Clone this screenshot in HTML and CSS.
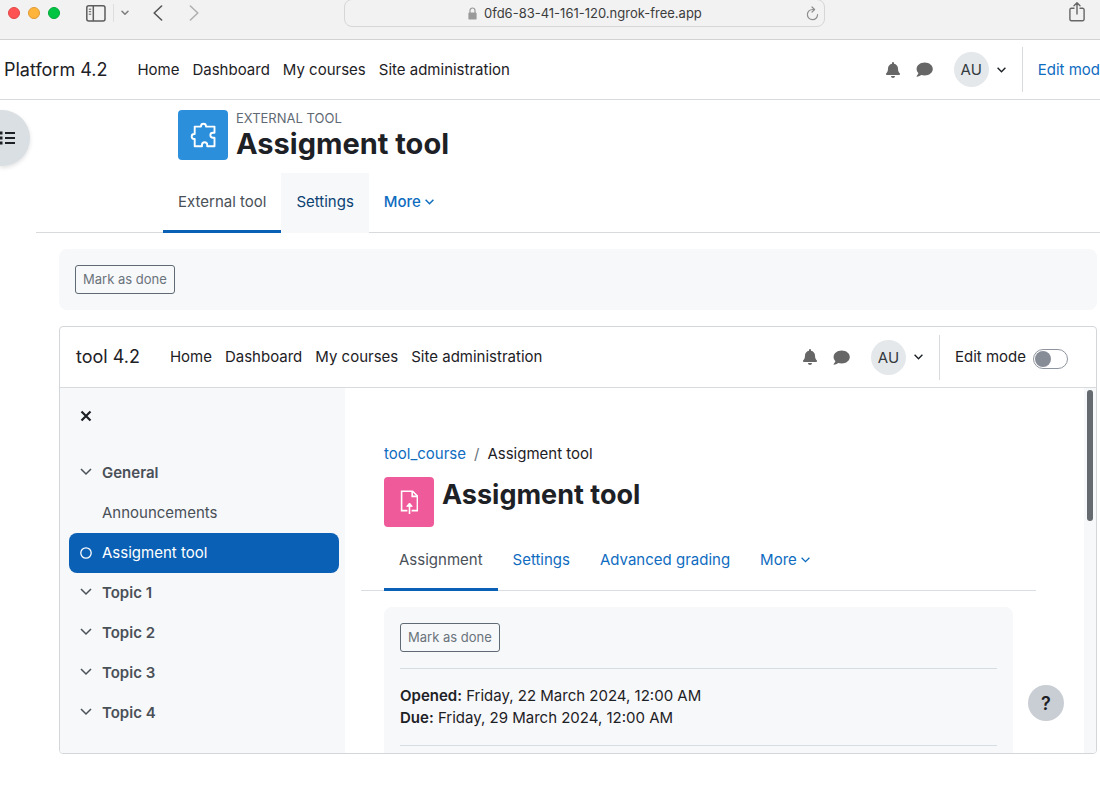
FILE: index.html
```html
<!DOCTYPE html>
<html lang="en">

<head>
    <meta charset="UTF-8">
    <meta name="viewport" content="width=device-width, initial-scale=1.0">
    <title>Assigment tool</title>
    <link rel="stylesheet" href="styles.css">
</head>

<body>
    <!-- Browser toolbar -->
    <div class="toolbar">
        <div class="toolbar-left">
            <span class="light red"></span>
            <span class="light yellow"></span>
            <span class="light green"></span>
            <button class="icon-btn sidebar-btn" aria-label="Sidebar">
                <svg width="20" height="17" viewBox="0 0 20 17" fill="none" stroke="#5c5c5c" stroke-width="1.5">
                    <rect x="0.8" y="0.8" width="18.2" height="15.2" rx="2" />
                    <path d="M7.3 1v15" />
                    <path d="M2.8 4.2h2.4M2.8 6.7h2.4M2.8 9.2h2.4" stroke-width="1" />
                </svg>
            </button>
            <span class="toolbar-divider"></span>
            <button class="icon-btn" aria-label="Tab groups">
                <svg width="8" height="6" viewBox="0 0 8 6" fill="none" stroke="#7c7c7c" stroke-width="1.5" stroke-linecap="round" stroke-linejoin="round">
                    <path d="M1 1.2l3 3 3-3" />
                </svg>
            </button>
            <button class="icon-btn back-btn" aria-label="Back">
                <svg width="10" height="16" viewBox="0 0 10 16" fill="none" stroke="#555" stroke-width="1.6" stroke-linecap="round" stroke-linejoin="round">
                    <path d="M8.6 1L1.2 8l7.4 7" />
                </svg>
            </button>
            <button class="icon-btn forward-btn" aria-label="Forward">
                <svg width="10" height="16" viewBox="0 0 10 16" fill="none" stroke="#b0b0b0" stroke-width="1.6" stroke-linecap="round" stroke-linejoin="round">
                    <path d="M1.4 1l7.4 7-7.4 7" />
                </svg>
            </button>
        </div>
        <div class="url-bar">
            <svg width="9" height="13" viewBox="0 0 9 13">
                <rect x="0.4" y="5.4" width="8.2" height="7.2" rx="1.2" fill="#999" />
                <path d="M2 6V3.5a2.5 2.5 0 0 1 5 0V6" fill="none" stroke="#999" stroke-width="1.2" />
            </svg>
            <span>0fd6-83-41-161-120.ngrok-free.app</span>
            <button class="icon-btn reload-btn" aria-label="Reload">
                <svg width="13" height="15" viewBox="0 0 13 15" fill="none" stroke="#8e8e8e" stroke-width="1.2" stroke-linecap="round" stroke-linejoin="round">
                    <path d="M11.6 8.6A5.1 5.1 0 1 1 6.6 3.5h1.6" />
                    <path d="M6 1l2.6 2.5L6 6" />
                </svg>
            </button>
        </div>
        <div class="toolbar-right">
            <button class="icon-btn" aria-label="Share">
                <svg width="16" height="22" viewBox="0 0 16 22" fill="none" stroke="#666" stroke-width="1.4" stroke-linecap="round" stroke-linejoin="round">
                    <path d="M5 6.2H2.4A1.5 1.5 0 0 0 .9 7.7v9.600a1.5 1.5 0 0 0 1.5 1.5h11.2a1.5 1.5 0 0 0 1.5-1.5V7.700a1.5 1.5 0 0 0-1.5-1.5H11" />
                    <path d="M8 12V1M5 3.800L8 .8l3 3" />
                </svg>
            </button>
        </div>
    </div>

    <!-- Platform navigation -->
    <nav class="navbar platform-nav">
        <a class="brand" href="#">Platform 4.2</a>
        <div class="nav-links">
            <a href="#">Home</a>
            <a href="#">Dashboard</a>
            <a href="#">My courses</a>
            <a href="#">Site administration</a>
        </div>
        <div class="user-nav">
            <button class="icon-btn" aria-label="Notifications">
                <svg width="14" height="16" viewBox="0 0 448 512" fill="#666">
                    <path d="M224 512c35 0 64-29 64-64H160c0 35 29 64 64 64zm215-150c-19-21-55-52-55-154 0-78-54-140-128-155V32a32 32 0 0 0-64 0v21C118 68 64 130 64 208c0 102-36 133-55 154-6 6-9 14-9 22 0 16 13 32 32 32h384c19 0 32-16 32-32 0-8-3-16-9-22z" />
                </svg>
            </button>
            <button class="icon-btn" aria-label="Messages">
                <svg width="17" height="15" viewBox="0 0 17 15" fill="#666">
                    <path d="M8.700 .5C4.200 .5 .6 3.400 .6 7c0 1.600 .7 3 1.800 4.100C2.100 12.500 1.100 13.600 .6 14.200c-.2 .2 0 .5 .3 .5 1.900-.1 3.400-.9 4.400-1.700 1 .3 2.200 .5 3.400 .5 4.500 0 8.100-2.900 8.100-6.500S13.200 .5 8.700 .5z" />
                </svg>
            </button>
            <button class="user-menu">
                <span class="avatar">AU</span>
                <svg width="9" height="6" viewBox="0 0 9 6" fill="none" stroke="#1d2125" stroke-width="1.4"><path d="M.6 .8l3.9 3.9L8.4 .8" /></svg>
            </button>
            <a class="edit-mode" href="#">Edit mod</a>
        </div>
    </nav>

    <button class="drawer-toggle" aria-label="Open course index">
        <svg width="16" height="14" viewBox="0 0 16 14" stroke="#1d2125" stroke-width="2">
            <path d="M5 2h10M5 7h10M5 12h10" />
            <path d="M0 2h2.5M0 7h2.5M0 12h2.5" stroke-width="3" />
        </svg>
    </button>

    <header class="page-header">
        <div class="activity-header">
            <div class="activity-icon blue">
                <svg width="26" height="26" viewBox="0 0 26 26" fill="none" stroke="#fff" stroke-width="1.9" stroke-linejoin="round">
                    <path d="M4.700 4.600H11V4.200a2.500 2.500 0 0 1 5 0V4.600H24.500V10.800H22.800a2.400 2.400 0 0 0 0 4.900H24.500V24.300H17.200V22.800a2.600 2.600 0 0 0-5.200 0V24.300H4.700V17H4.200a2.500 2.500 0 0 1 0-5H4.700z" />
                </svg>
            </div>
            <div>
                <div class="activity-type">External tool</div>
                <h1>Assigment tool</h1>
            </div>
        </div>
        <nav class="tabs platform-tabs">
            <a class="tab active" href="#">External tool</a>
            <a class="tab hover" href="#">Settings</a>
            <a class="tab more" href="#">More
                <svg width="9" height="6" viewBox="0 0 9 6" fill="none" stroke="#0f6cbf" stroke-width="1.5"><path d="M.6 .8l3.9 3.9L8.4 .8" /></svg>
            </a>
        </nav>
    </header>

    <main class="page-content">
        <div class="completion">
            <button class="btn-outline">Mark as done</button>
        </div>

        <!-- Embedded tool -->
        <section class="tool-frame">
            <nav class="navbar tool-nav">
                <a class="brand" href="#">tool 4.2</a>
                <div class="nav-links">
                    <a href="#">Home</a>
                    <a href="#">Dashboard</a>
                    <a href="#">My courses</a>
                    <a href="#">Site administration</a>
                </div>
                <div class="user-nav">
                    <button class="icon-btn" aria-label="Notifications">
                        <svg width="14" height="16" viewBox="0 0 448 512" fill="#666">
                            <path d="M224 512c35 0 64-29 64-64H160c0 35 29 64 64 64zm215-150c-19-21-55-52-55-154 0-78-54-140-128-155V32a32 32 0 0 0-64 0v21C118 68 64 130 64 208c0 102-36 133-55 154-6 6-9 14-9 22 0 16 13 32 32 32h384c19 0 32-16 32-32 0-8-3-16-9-22z" />
                        </svg>
                    </button>
                    <button class="icon-btn" aria-label="Messages">
                        <svg width="17" height="15" viewBox="0 0 17 15" fill="#666">
                            <path d="M8.700 .5C4.200 .5 .6 3.400 .6 7c0 1.600 .7 3 1.800 4.100C2.100 12.500 1.100 13.600 .6 14.200c-.2 .2 0 .5 .3 .5 1.900-.1 3.400-.9 4.400-1.700 1 .3 2.200 .5 3.400 .5 4.500 0 8.100-2.900 8.100-6.500S13.200 .5 8.700 .5z" />
                        </svg>
                    </button>
                    <button class="user-menu">
                        <span class="avatar">AU</span>
                        <svg width="9" height="6" viewBox="0 0 9 6" fill="none" stroke="#1d2125" stroke-width="1.4"><path d="M.6 .8l3.9 3.9L8.4 .8" /></svg>
                    </button>
                    <div class="edit-mode">
                        <label for="edit-switch">Edit mode</label>
                        <input class="switch" type="checkbox" id="edit-switch">
                    </div>
                </div>
            </nav>

            <div class="tool-body">
                <aside class="course-index">
                    <button class="icon-btn close-btn" aria-label="Close course index">
                        <svg width="12" height="12" viewBox="0 0 12 12" stroke="#1d2125" stroke-width="2.2"><path d="M1.5 1.5l9 9M10.5 1.5l-9 9" /></svg>
                    </button>
                    <a class="index-item section" href="#">
                        <svg width="12" height="8" viewBox="0 0 12 8" fill="none" stroke="#495057" stroke-width="1.5"><path d="M1 1l5 5 5-5" /></svg>
                        General
                    </a>
                    <a class="index-item child" href="#">Announcements</a>
                    <a class="index-item current" href="#">
                        <svg width="12" height="12" viewBox="0 0 12 12" fill="none" stroke="#fff" stroke-width="1.3"><circle cx="6" cy="6" r="5.2" /></svg>
                        Assigment tool
                    </a>
                    <a class="index-item section" href="#">
                        <svg width="12" height="8" viewBox="0 0 12 8" fill="none" stroke="#495057" stroke-width="1.5"><path d="M1 1l5 5 5-5" /></svg>
                        Topic 1
                    </a>
                    <a class="index-item section" href="#">
                        <svg width="12" height="8" viewBox="0 0 12 8" fill="none" stroke="#495057" stroke-width="1.5"><path d="M1 1l5 5 5-5" /></svg>
                        Topic 2
                    </a>
                    <a class="index-item section" href="#">
                        <svg width="12" height="8" viewBox="0 0 12 8" fill="none" stroke="#495057" stroke-width="1.5"><path d="M1 1l5 5 5-5" /></svg>
                        Topic 3
                    </a>
                    <a class="index-item section" href="#">
                        <svg width="12" height="8" viewBox="0 0 12 8" fill="none" stroke="#495057" stroke-width="1.5"><path d="M1 1l5 5 5-5" /></svg>
                        Topic 4
                    </a>
                </aside>

                <div class="tool-content">
                    <div class="breadcrumb">
                        <a href="#">tool_course</a>
                        <span class="separator">/</span>
                        <span>Assigment tool</span>
                    </div>
                    <div class="tool-title">
                        <div class="activity-icon pink">
                            <svg width="18" height="24" viewBox="0 0 18 24" fill="none" stroke="#fff" stroke-width="1.6">
                                <path d="M7.4 20.6H1.600V1.200h11L17.400 6v14.600h-5.800" />
                                <path d="M12.200 1.400V6.400H17.200" />
                                <path d="M9.500 24V14" />
                                <path d="M6.700 16.300l2.800-3.300 2.800 3.300z" fill="#fff" stroke-width="1" />
                            </svg>
                        </div>
                        <h2>Assigment tool</h2>
                    </div>
                    <nav class="tabs tool-tabs">
                        <a class="tab active" href="#">Assignment</a>
                        <a class="tab" href="#">Settings</a>
                        <a class="tab" href="#">Advanced grading</a>
                        <a class="tab" href="#">More
                            <svg width="9" height="6" viewBox="0 0 9 6" fill="none" stroke="#0f6cbf" stroke-width="1.3"><path d="M.6 .8l3.9 3.9L8.4 .8" /></svg>
                        </a>
                    </nav>
                    <div class="details">
                        <button class="btn-outline">Mark as done</button>
                        <div class="dates">
                            <div><strong>Opened:</strong> Friday, 22 March 2024, 12:00 AM</div>
                            <div><strong>Due:</strong> Friday, 29 March 2024, 12:00 AM</div>
                        </div>
                    </div>
                </div>

                <div class="scroll-track">
                    <div class="scroll-thumb"></div>
                </div>
            </div>

            <button class="help-btn" aria-label="Help">?</button>
        </section>
    </main>
</body>

</html>
```
FILE: styles.css
```css
* {
    box-sizing: border-box;
}

body {
    margin: 0;
    font-family: Inter, "Liberation Sans", sans-serif;
    font-size: 15px;
    line-height: 22px;
    color: #1d2125;
    background-color: #fff;
}

a {
    color: #0f6cbf;
    text-decoration: none;
}

button {
    font-family: inherit;
    cursor: pointer;
}

svg {
    display: block;
    flex-shrink: 0;
}

.icon-btn {
    padding: 0;
    border: none;
    background: none;
}

/* Browser toolbar */
.toolbar {
    display: flex;
    align-items: center;
    height: 40px;
    padding-bottom: 13px;
    background-color: #f2f2f2;
    border-bottom: 1px solid #d2d2d2;
}

.toolbar-left {
    display: flex;
    align-items: center;
    flex: 0 0 344px;
    padding-left: 8px;
}

.light {
    width: 12px;
    height: 12px;
    margin-right: 8px;
    border-radius: 50%;
}

.red {
    background-color: #ff5353;
    border: 1px solid #e24545;
}

.yellow {
    background-color: #ffb43c;
    border: 1px solid #e09a32;
}

.green {
    background-color: #00c543;
    border: 1px solid #00a838;
}

.sidebar-btn {
    margin-left: 18px;
}

.toolbar-divider {
    width: 1px;
    height: 18px;
    margin: 0 7px;
    background-color: #dedede;
}

.back-btn {
    margin-left: 24px;
}

.forward-btn {
    margin-left: 26px;
}

.url-bar {
    display: flex;
    align-items: center;
    flex: 0 1 481px;
    height: 28px;
    padding: 0 5px 0 123px;
    border: 1px solid #d6d6d6;
    border-radius: 8px;
    font-size: 13px;
    color: #3c3c3c;
}

.url-bar span {
    margin-left: 7px;
}

.reload-btn {
    margin-left: auto;
}

.toolbar-right {
    display: flex;
    flex: 1;
    justify-content: flex-end;
    padding-right: 15px;
}

/* Navigation bars */
.navbar {
    display: flex;
    align-items: center;
    white-space: nowrap;
    border-bottom: 1px solid #d8dbde;
}

.navbar a {
    color: #1d2125;
}

.navbar .brand {
    margin-right: 30px;
    font-size: 18px;
}

.nav-links {
    display: flex;
    gap: 13px;
}

.platform-nav {
    height: 60px;
    padding-left: 4px;
}

.tool-nav {
    height: 61px;
    padding: 0 28px 0 16px;
}

.user-nav {
    display: flex;
    align-items: center;
    gap: 16px;
    margin-left: auto;
}

.user-menu {
    display: flex;
    align-items: center;
    gap: 8px;
    margin-left: 5px;
    padding: 0;
    border: none;
    background: none;
}

.avatar {
    width: 35px;
    height: 35px;
    border-radius: 50%;
    background-color: #e4e8eb;
    color: #343a40;
    font-size: 15px;
    line-height: 35px;
    text-align: center;
}

.edit-mode {
    display: flex;
    align-items: center;
    gap: 7px;
    height: 45px;
    padding-left: 15px;
    border-left: 1px solid #d8dbde;
}

.platform-nav .edit-mode {
    color: #0f6cbf;
}

.switch {
    appearance: none;
    width: 35px;
    height: 20px;
    margin: 4px 0 0;
    padding: 1px;
    border: 1px solid #8f959e;
    border-radius: 10px;
    background-color: #fff;
}

.switch::before {
    content: "";
    display: block;
    width: 16px;
    height: 16px;
    border-radius: 50%;
    background-color: #868d97;
}

/* Drawer button over the left edge */
.drawer-toggle {
    position: absolute;
    left: 0;
    top: 110px;
    width: 30px;
    height: 56px;
    padding: 0;
    border: none;
    border-radius: 0 28px 28px 0;
    background-color: #dadfe3;
    box-shadow: 0 2px 4px rgba(0, 0, 0, 0.12);
}

/* Page header */
.page-header {
    margin-left: 36px;
    border-bottom: 1px solid #d8dbde;
}

.activity-header {
    display: flex;
    gap: 8px;
    padding: 10px 0 11px 142px;
}

.activity-icon {
    display: flex;
    align-items: center;
    justify-content: center;
    flex-shrink: 0;
    width: 50px;
    height: 50px;
    border-radius: 4px;
}

.blue {
    background-color: #2b8fdc;
}

.pink {
    background-color: #ef5b9a;
}

.activity-type {
    font-size: 13px;
    line-height: 16px;
    color: #5f6a74;
    text-transform: uppercase;
}

h1,
h2 {
    margin: 0;
    font-weight: 700;
    line-height: 36px;
}

h1 {
    font-size: 29px;
}

h2 {
    font-size: 27px;
}

.tabs {
    display: flex;
}

.tab {
    display: flex;
    align-items: center;
    gap: 4px;
    height: 60px;
    padding: 0 15px;
    border-bottom: 3px solid transparent;
    white-space: nowrap;
}

.tab.active {
    color: #495057;
    border-bottom-color: #0a60b5;
}

.tab.hover {
    color: #0b4272;
    background-color: #f7f8fa;
    border-bottom-color: #f7f8fa;
}

.tab.more {
    font-weight: 500;
}

.platform-tabs {
    margin-bottom: -1px;
    padding-left: 127px;
}

/* Page content */
.page-content {
    padding: 16px 3px 50px 59px;
}

.completion {
    margin-bottom: 16px;
    padding: 16px;
    border-radius: 8px;
    background-color: #f7f8fa;
}

.btn-outline {
    display: block;
    padding: 0 7px;
    border: 1px solid #5f6a74;
    border-radius: 3px;
    background: none;
    color: #6a737b;
    font-size: 13px;
    line-height: 27px;
}

.tool-frame {
    position: relative;
    height: 428px;
    border: 1px solid #d3d7da;
    border-radius: 4px;
    overflow: hidden;
}

.tool-body {
    display: flex;
    height: 365px;
}

.course-index {
    flex: 0 0 285px;
    padding: 22px 6px 0 9px;
    background-color: #f7f8fa;
}

.close-btn {
    display: block;
    margin: 0 0 31px 11px;
}

.index-item {
    display: flex;
    align-items: center;
    gap: 10px;
    height: 40px;
    padding-left: 11px;
    border-radius: 8px;
    color: #495057;
}

.section {
    font-weight: 600;
}

.section svg {
    margin-bottom: 3px;
}

.child {
    padding-left: 33px;
}

.current {
    background-color: #0a60b5;
    color: #fff;
}

.tool-content {
    flex: 1;
    padding: 55px 48px 0 16px;
}

.breadcrumb {
    display: flex;
    gap: 8px;
    padding-left: 23px;
}

.separator {
    color: #6a737b;
}

.tool-title {
    display: flex;
    gap: 8px;
    padding: 12px 0 4px 23px;
}

.tool-tabs {
    padding-left: 23px;
    border-bottom: 1px solid #d8dee4;
}

.tool-tabs .tab {
    margin-bottom: -1px;
}

.details {
    height: 200px;
    margin: 16px 23px 0;
    padding: 16px;
    border-radius: 8px;
    background-color: #f7f8fa;
}

.dates {
    margin-top: 16px;
    padding: 16px 0;
    border-top: 1px solid #d5dce2;
    border-bottom: 1px solid #d5dce2;
}

strong {
    font-weight: 600;
}

.scroll-track {
    flex: 0 0 12px;
    padding: 2px 3px;
    background-color: #f7f8fa;
}

.scroll-thumb {
    height: 131px;
    border-radius: 3px;
    background-color: #656a70;
}

/* Help button floats over the tool */
.help-btn {
    position: absolute;
    right: 32px;
    bottom: 32px;
    width: 36px;
    height: 36px;
    padding: 0;
    border: none;
    border-radius: 50%;
    background-color: #c9ced4;
    color: #1d2125;
    font-size: 18px;
    font-weight: 600;
}
```
